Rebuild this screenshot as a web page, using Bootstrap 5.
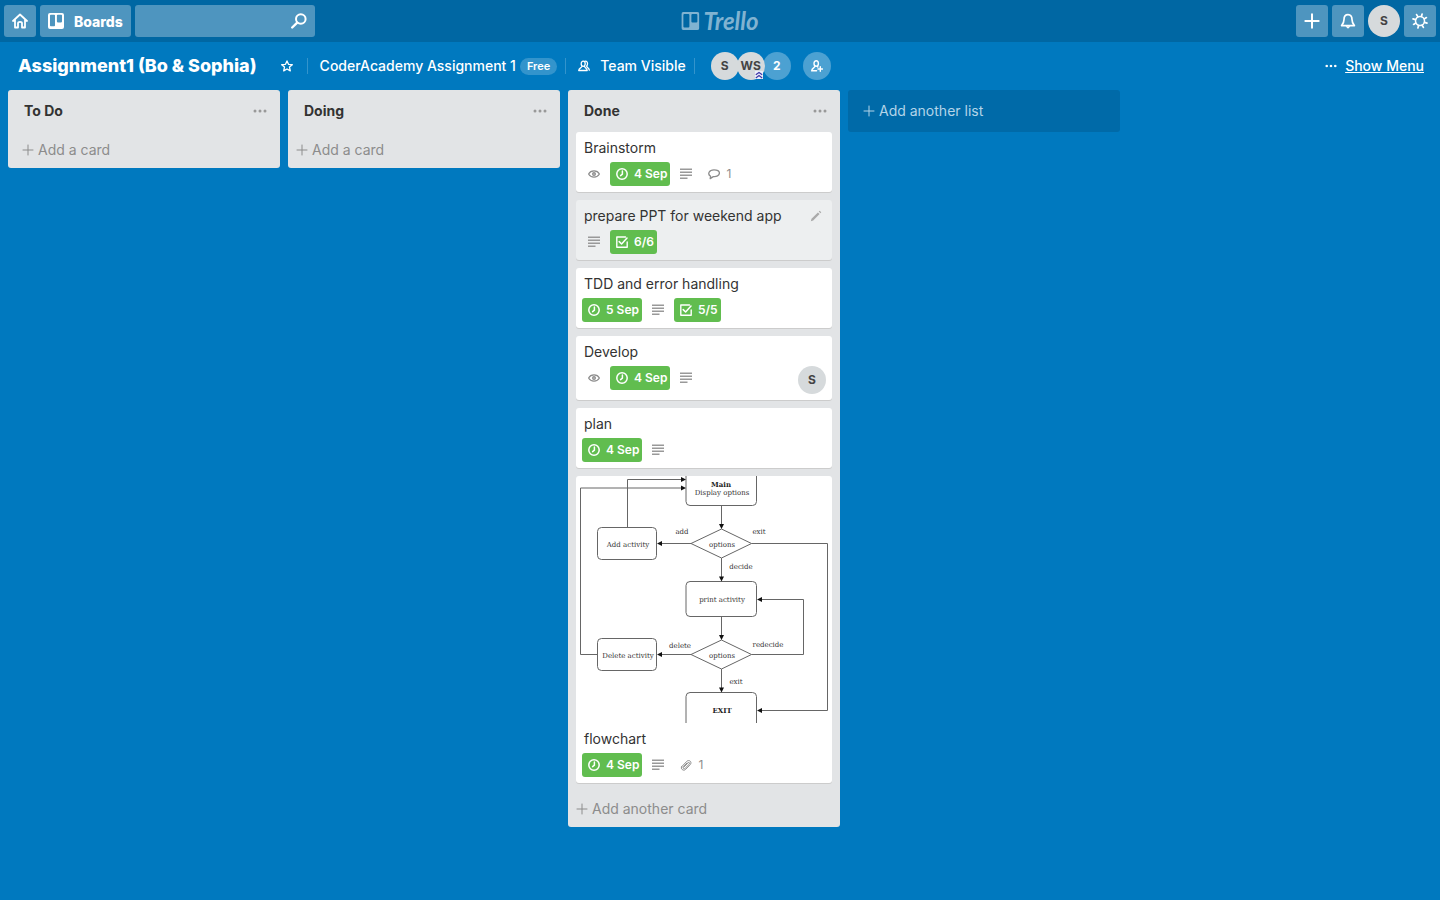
<!DOCTYPE html>
<html lang="en">
<head>
<meta charset="utf-8">
<meta name="viewport" content="width=device-width, initial-scale=1">
<title>Assignment1 (Bo &amp; Sophia) | Trello</title>
<link href="https://cdn.jsdelivr.net/npm/bootstrap@5.3.0/dist/css/bootstrap.min.css" rel="stylesheet">
<style>
  body { background: #0079bf; color: #333; font: 14px/20px Inter, "Liberation Sans", sans-serif; }
  svg { display: block; flex: none; }
  .line-icon { fill: none; stroke: currentColor; stroke-linecap: round; stroke-linejoin: round; }
  .topbar { background: #0067a3; height: 42px; }
  .btn-top, .search-box { background: #4e95bf; color: #fff; border: 0; border-radius: 3px; height: 32px; }
  .btn-top { min-width: 32px; padding: 0; font-size: 14px; font-weight: 800; }
  .btn-boards { padding: 0 8px; gap: 10px; }
  .btn-top:hover { background: #3a86b4; color: #fff; }
  .search-box { width: 180px; }
  .search-box input { background: transparent; border: 0; outline: 0; min-width: 0; color: #fff; }
  .logo { color: #80b3d1; }
  .logo-word { font: italic 700 24px/24px Lato, sans-serif; }
  .avatar { width: 28px; height: 28px; border-radius: 50%; border: 0; padding: 0; background: #d6dadc; color: #444; font-size: 12px; font-weight: 700; }
  .avatar-lg { width: 32px; height: 32px; }
  .avatar-soft { background: #4ca1d2; color: #fff; }
  .avatar-overlap { margin-left: -2px; }
  .board-bar { height: 48px; padding: 0 16px 0 18px; color: #fff; }
  .board-bar a, .board-bar .btn-plain { color: #fff; font-weight: 500; }
  .board-title { font-size: 18px; line-height: 24px; font-weight: 800; }
  .btn-plain { border: 0; background: transparent; padding: 0; font: inherit; display: flex; align-items: center; }
  .btn-visibility { gap: 10px; }
  .btn-star { margin: 0 6px 0 24px; }
  .member-row { gap: 12px; }
  .divider { width: 1px; height: 16px; margin: 0 12px 0 8px; background: #3394cc; }
  .pill { background: #3394cc; border-radius: 9px; font-size: 11px; line-height: 17px; padding: 0 7px; font-weight: 600; }
  .org-mark { right: 2px; bottom: 1px; }
  .list-col { width: 272px; flex: none; border-radius: 3px; background: #e2e4e6; }
  .list-head { height: 42px; padding: 0 12px 0 16px; }
  .list-head h2 { font-size: 14px; line-height: 20px; font-weight: 700; }
  .list-head button { color: #999; }
  .add-card { height: 36px; padding-left: 8px; gap: 4px; color: #8c8c8c; width: 100%; }
  .add-card.indent { padding-left: 14px; }
  .add-list { height: 42px; padding-left: 15px; gap: 4px; background: #006aa8; color: #b3d4e8; }
  .task { background: #fff; border-radius: 3px; margin: 0 8px 8px; box-shadow: 0 1px 0 #ccc; overflow: hidden; }
  .task.hovered { background: #edeff0; }
  .task-body { padding: 6px; }
  .task h3 { font-size: 14px; line-height: 20px; font-weight: 400; margin: 0 2px 4px; }
  .tag { height: 24px; border-radius: 3px; font-size: 12px; color: #8c8c8c; display: flex; align-items: center; }
  .tag svg { margin: 0 6px; }
  .tag.green { background: #61bd4f; color: #fff; font-weight: 600; padding-right: 3px; }
  .chart text { font: 7px "DejaVu Serif", serif; fill: #333; text-anchor: middle; }
  .chart .strong { font-weight: 700; fill: #222; }
</style>
</head>
<body>
<svg width="0" height="0" class="position-absolute" aria-hidden="true">
  <symbol id="i-plus" viewBox="0 0 12 12"><path d="M6 1v10M1 6h10"/></symbol>
  <symbol id="i-clock" viewBox="0 0 12 12"><circle cx="6" cy="6" r="5.2" stroke-width="1.5"/><path d="M6.4 3v3.2L4.6 7.6" stroke-width="1.5"/></symbol>
  <symbol id="i-desc" viewBox="0 0 12 12"><path d="M0 1.200h12M0 4.200h12M0 7.200h12M0 10.200h7.500" stroke="#999" stroke-width="1.400" stroke-linecap="butt"/></symbol>
  <symbol id="i-eye" viewBox="0 0 12 12"><path d="M.6 6C2.8 1.9 9.2 1.9 11.4 6 9.2 10.1 2.8 10.1.6 6z" stroke-width="1.2"/><circle cx="6" cy="6" r="1.3" stroke-width="1.4"/></symbol>
  <symbol id="i-check" viewBox="0 0 12 12"><path d="M9.5 1H.8v10.2h10.4V6" stroke-width="1.4"/><path d="M3.2 5.6 5.6 8 11 2" stroke-width="1.5"/></symbol>
  <symbol id="i-chat" viewBox="0 0 12 12"><path d="M2.600 8.200C-.9 6.200 1 1.800 6 1.800c3.500 0 5.400 1.300 5.400 3.300 0 2.500-3 3.900-6.100 3.500L2.200 10.600z" stroke-width="1.300"/></symbol>
  <symbol id="i-clip" viewBox="0 0 12 12"><path d="M2.200 7.200 6.800 2.300C8.900.2 12.400 2.800 10.300 5.500L5.500 10.500C3.500 12.400-.2 9.800 1.800 7.300M3.800 8.100 8 3.800c1-.9 2.200.3 1.300 1.300L5.200 9.200c-1.300 1.300-2.900-.3-1.700-1.500L7 4" stroke-width="1"/></symbol>
  <symbol id="i-dots" viewBox="0 0 14 4"><g fill="currentColor" stroke="none"><circle cx="2" cy="2" r="1.500"/><circle cx="7" cy="2" r="1.500"/><circle cx="12" cy="2" r="1.500"/></g></symbol>
</svg>

<header class="topbar d-flex align-items-center justify-content-between px-1 position-relative">
  <div class="d-flex gap-1">
    <button class="btn btn-top d-flex align-items-center justify-content-center" aria-label="Home">
      <svg class="line-icon" width="16" height="16" viewBox="0 0 16 16" stroke-width="1.800"><path d="M1 8 8 1.500 15 8M3 6.800V14.500H6V10.300Q6 8.800 8 8.800T10 10.300V14.500H13V6.800"/></svg>
    </button>
    <button class="btn btn-top btn-boards d-flex align-items-center">
      <svg width="16" height="16" viewBox="0 0 16 16"><path fill="#fff" fill-rule="evenodd" d="M2 0h12q2 0 2 2v12q0 2-2 2H2q-2 0-2-2V2Q0 0 2 0zM2.800 1.800q-.8 0-.8.8v9.900q0 .8.8.8h3.400q.8 0 .8-.8V2.600q0-.8-.8-.8zM9.700 1.800q-.8 0-.8.8v6q0 .8.8.8h3.500q.8 0 .8-.8v-6q0-.8-.8-.8z"/></svg>
      <span>Boards</span>
    </button>
    <label class="search-box d-flex align-items-center px-2">
      <input class="flex-grow-1" type="text" aria-label="Search">
      <svg class="line-icon" width="16" height="16" viewBox="0 0 16 16"><circle cx="9.800" cy="6" r="4.800" stroke-width="2"/><path d="M6.200 9.700 1.200 14.500" stroke-width="2.400"/></svg>
    </label>
  </div>
  <a href="#" class="logo d-flex align-items-center text-decoration-none position-absolute start-50 translate-middle-x" aria-label="Trello home">
    <svg width="18" height="18" viewBox="0 0 18 18"><path fill="currentColor" fill-rule="evenodd" d="M2 0h14q2 0 2 2v14q0 2-2 2H2q-2 0-2-2V2Q0 0 2 0zM3 2q-1 0-1 1v11.500q0 1 1 1h4q1 0 1-1V3q0-1-1-1zM11 2q-1 0-1 1v6.500q0 1 1 1h4q1 0 1-1V3q0-1-1-1z"/></svg>
    <span class="logo-word ms-1">Trello</span>
  </a>
  <div class="d-flex gap-1">
    <button class="btn btn-top d-flex align-items-center justify-content-center" aria-label="Create"><svg class="line-icon" width="16" height="16" viewBox="0 0 12 12" stroke-width="1.500"><use href="#i-plus"/></svg></button>
    <button class="btn btn-top d-flex align-items-center justify-content-center" aria-label="Notifications">
      <svg class="line-icon" width="16" height="16" viewBox="0 0 16 16" stroke-width="1.700"><path d="M8 1.600C5.200 1.600 4 4 4 6.500 4 9.500 3 11 1.600 12.600H14.400C13 11 12 9.500 12 6.500 12 4 10.800 1.600 8 1.600z"/><path d="M6.300 13.500Q8 17 9.700 13.500z" fill="currentColor" stroke-width=".8"/></svg>
    </button>
    <button class="avatar avatar-lg">S</button>
    <button class="btn btn-top d-flex align-items-center justify-content-center" aria-label="Settings">
      <svg class="line-icon" width="16" height="16" viewBox="0 0 16 16"><circle cx="8" cy="8" r="4.500" stroke-width="1.500"/><path stroke-width="1.700" d="M9.400 3.500 10.100 1M12.200 5.900 14.400 4.600M12.500 9.400 15 10.100M10.100 12.200 11.400 14.400M6.600 12.500 5.900 15M3.800 10.100 1.600 11.400M3.500 6.600 1 5.900M5.900 3.800 4.600 1.600"/></svg>
    </button>
  </div>
</header>

<nav class="board-bar d-flex align-items-center justify-content-between" aria-label="Board">
  <div class="d-flex align-items-center">
    <h1 class="board-title m-0">Assignment1 (Bo &amp; Sophia)</h1>
    <button class="btn-plain btn-star" aria-label="Star board"><svg class="line-icon" width="12" height="12" viewBox="0 0 12 12" stroke-width="1.300"><path d="M6 .9 7.500 4.300 11.300 4.700 8.500 7.100 9.300 10.900 6 9 2.700 10.900 3.500 7.100.7 4.700 4.500 4.300z"/></svg></button>
    <span class="divider"></span>
    <a href="#" class="text-decoration-none">CoderAcademy Assignment 1</a>
    <span class="pill ms-1">Free</span>
    <span class="divider"></span>
    <button class="btn-plain btn-visibility">
      <svg class="line-icon" width="12" height="12" viewBox="0 0 12 12" stroke-width="1.300"><ellipse cx="5.200" cy="3.800" rx="2" ry="2.600"/><path d="M4 6.200C3.800 8 .9 7.800.7 10.500H9.200C9.200 8 6.700 8 6.400 6.200M6.800 1.300C9.500.5 10.300 4 8.600 6.200 9 7.800 11 8 11.300 10.200"/></svg>
      <span>Team Visible</span>
    </button>
    <span class="divider"></span>
    <div class="member-row d-flex ms-1">
      <div class="d-flex">
        <button class="avatar">S</button>
        <button class="avatar avatar-overlap position-relative z-1">WS
          <svg class="org-mark position-absolute" width="8" height="8" viewBox="0 0 8 8"><rect width="8" height="8" fill="#eceef8"/><path d="M.8 3.800 4 1.400 7.200 3.800M.8 7 4 4.600 7.200 7" fill="none" stroke="#3f37a8" stroke-width="1.200"/></svg>
        </button>
        <button class="avatar avatar-soft avatar-overlap">2</button>
      </div>
      <button class="avatar avatar-soft d-flex align-items-center justify-content-center" aria-label="Invite">
        <svg class="line-icon" width="12" height="12" viewBox="0 0 12 12" stroke-width="1.400"><ellipse cx="5.200" cy="3.500" rx="2.200" ry="2.800"/><path d="M4 6.200C3.700 8 .9 7.800.7 10.800H5.600M6.300 6.400 6.800 7M9.300 6.700v4.600M7 9h4.600"/></svg>
      </button>
    </div>
  </div>
  <a href="#" class="d-flex align-items-center gap-2 text-decoration-none"><svg width="12" height="4" viewBox="0 0 14 4"><use href="#i-dots"/></svg><span class="text-decoration-underline">Show Menu</span></a>
</nav>

<main class="d-flex align-items-start gap-2 px-2">
  <section class="list-col">
    <div class="list-head d-flex align-items-center justify-content-between"><h2 class="m-0">To Do</h2><button class="btn-plain" aria-label="List actions"><svg width="16" height="4" viewBox="0 0 14 4"><use href="#i-dots"/></svg></button></div>
    <button class="btn-plain add-card indent"><svg class="line-icon" width="12" height="12"><use href="#i-plus"/></svg>Add a card</button>
  </section>

  <section class="list-col">
    <div class="list-head d-flex align-items-center justify-content-between"><h2 class="m-0">Doing</h2><button class="btn-plain" aria-label="List actions"><svg width="16" height="4" viewBox="0 0 14 4"><use href="#i-dots"/></svg></button></div>
    <button class="btn-plain add-card"><svg class="line-icon" width="12" height="12"><use href="#i-plus"/></svg>Add a card</button>
  </section>

  <section class="list-col">
    <div class="list-head d-flex align-items-center justify-content-between"><h2 class="m-0">Done</h2><button class="btn-plain" aria-label="List actions"><svg width="16" height="4" viewBox="0 0 14 4"><use href="#i-dots"/></svg></button></div>

    <article class="task"><div class="task-body">
      <h3>Brainstorm</h3>
      <div class="d-flex gap-1">
        <span class="tag"><svg class="line-icon" width="12" height="12"><use href="#i-eye"/></svg></span>
        <span class="tag green"><svg class="line-icon" width="12" height="12"><use href="#i-clock"/></svg>4 Sep</span>
        <span class="tag"><svg class="line-icon" width="12" height="12"><use href="#i-desc"/></svg></span>
        <span class="tag"><svg class="line-icon" width="12" height="12"><use href="#i-chat"/></svg>1</span>
      </div>
    </div></article>

    <article class="task hovered"><div class="task-body">
      <div class="d-flex justify-content-between">
        <h3>prepare PPT for weekend app</h3>
        <button class="btn-plain me-1 mb-1" aria-label="Edit card"><svg width="12" height="12" viewBox="0 0 12 12" fill="#aaa"><path d="M.8 11.200 1.500 8.800 7.900 2.400 9.600 4.100 3.200 10.500zM8.700 1.600 9.700.7 11.300 2.300 10.400 3.300z"/></svg></button>
      </div>
      <div class="d-flex gap-1">
        <span class="tag"><svg class="line-icon" width="12" height="12"><use href="#i-desc"/></svg></span>
        <span class="tag green"><svg class="line-icon" width="12" height="12"><use href="#i-check"/></svg>6/6</span>
      </div>
    </div></article>

    <article class="task"><div class="task-body">
      <h3>TDD and error handling</h3>
      <div class="d-flex gap-1">
        <span class="tag green"><svg class="line-icon" width="12" height="12"><use href="#i-clock"/></svg>5 Sep</span>
        <span class="tag"><svg class="line-icon" width="12" height="12"><use href="#i-desc"/></svg></span>
        <span class="tag green"><svg class="line-icon" width="12" height="12"><use href="#i-check"/></svg>5/5</span>
      </div>
    </div></article>

    <article class="task"><div class="task-body">
      <h3>Develop</h3>
      <div class="d-flex gap-1">
        <span class="tag"><svg class="line-icon" width="12" height="12"><use href="#i-eye"/></svg></span>
        <span class="tag green"><svg class="line-icon" width="12" height="12"><use href="#i-clock"/></svg>4 Sep</span>
        <span class="tag"><svg class="line-icon" width="12" height="12"><use href="#i-desc"/></svg></span>
        <button class="avatar ms-auto">S</button>
      </div>
    </div></article>

    <article class="task"><div class="task-body">
      <h3>plan</h3>
      <div class="d-flex gap-1">
        <span class="tag green"><svg class="line-icon" width="12" height="12"><use href="#i-clock"/></svg>4 Sep</span>
        <span class="tag"><svg class="line-icon" width="12" height="12"><use href="#i-desc"/></svg></span>
      </div>
    </div></article>

    <article class="task">
      <svg class="chart w-100" viewBox="0 0 256 247" role="img" aria-label="Activity flowchart">
        <g fill="none" stroke="#666" stroke-width="1">
          <rect x="110" y="-10" width="70.500" height="39.500" rx="4"/>
          <rect x="110" y="105.500" width="70.500" height="35" rx="4"/>
          <rect x="110" y="216.500" width="70.500" height="40" rx="4"/>
          <rect x="21.500" y="51.500" width="59" height="32" rx="4"/>
          <rect x="21.500" y="162.500" width="59" height="32" rx="4"/>
          <path d="M145.500 53 175.500 67.500 145.500 82 115 67.500zM145.500 164 175.500 178.500 145.500 193 115 178.500z"/>
          <path d="M145.500 29.500V50M145.500 82V103M145.500 140.500V161M145.500 193V214M115 67.500H84M115 178.500H84M51.500 51.500V3.500H107M21.500 178.500H4.500V12H107M175.500 67.500H251.500V234.500H184M175.500 178.500H227.500V123.500H184"/>
        </g>
        <path fill="#111" d="M143 48h5l-2.500 5zM143 100.500h5l-2.500 5zM143 159h5l-2.500 5zM143 211.500h5l-2.500 5zM86 65v5l-5-2.500zM86 176v5l-5-2.500zM105 1v5l5-2.500zM105 9.500v5l5-2.500zM186 232v5l-5-2.500zM186 121v5l-5-2.500z"/>
        <text class="strong" x="145" y="11">Main</text>
        <text x="146" y="19">Display options</text>
        <text x="146" y="71">options</text>
        <text x="106" y="58">add</text>
        <text x="183" y="58">exit</text>
        <text x="52" y="71">Add activity</text>
        <text x="165" y="93">decide</text>
        <text x="146" y="126">print activity</text>
        <text x="146" y="182">options</text>
        <text x="104" y="172">delete</text>
        <text x="192" y="171">redecide</text>
        <text x="52" y="182">Delete activity</text>
        <text x="160" y="208">exit</text>
        <text class="strong" x="146" y="237">EXIT</text>
      </svg>
      <div class="task-body">
        <h3>flowchart</h3>
        <div class="d-flex gap-1">
          <span class="tag green"><svg class="line-icon" width="12" height="12"><use href="#i-clock"/></svg>4 Sep</span>
          <span class="tag"><svg class="line-icon" width="12" height="12"><use href="#i-desc"/></svg></span>
          <span class="tag"><svg class="line-icon" width="12" height="12"><use href="#i-clip"/></svg>1</span>
        </div>
      </div>
    </article>
    <button class="btn-plain add-card"><svg class="line-icon" width="12" height="12"><use href="#i-plus"/></svg>Add another card</button>
  </section>

  <button class="list-col btn-plain add-list"><svg class="line-icon" width="12" height="12"><use href="#i-plus"/></svg>Add another list</button>
</main>
<script src="https://cdn.jsdelivr.net/npm/bootstrap@5.3.0/dist/js/bootstrap.bundle.min.js"></script>
</body>
</html>
